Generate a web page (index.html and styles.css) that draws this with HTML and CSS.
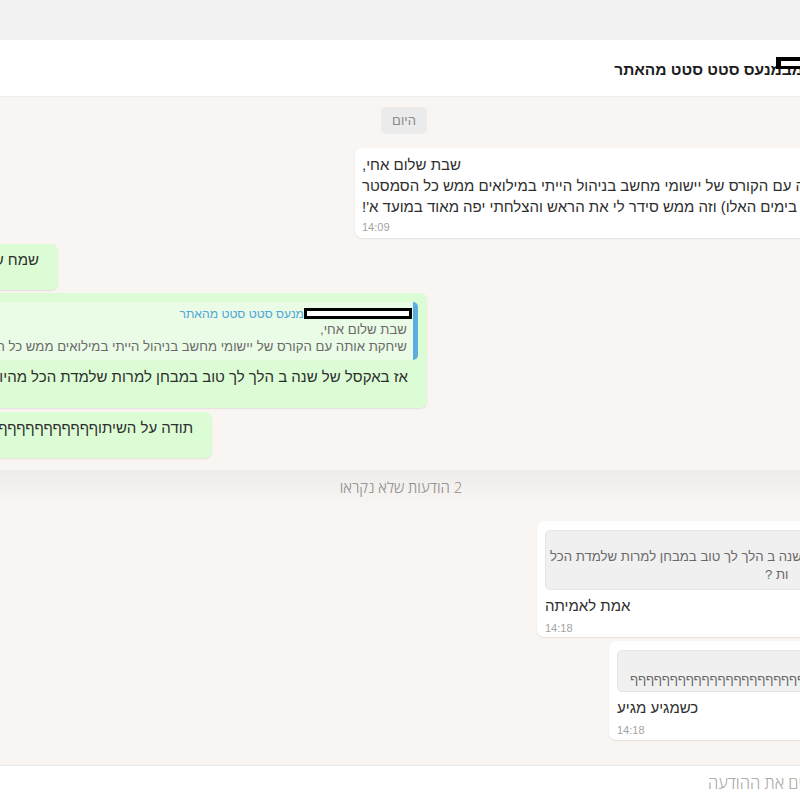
FILE: index.html
```html
<!DOCTYPE html>
<html lang="he">
<head>
<meta charset="utf-8">
<title>צ'אט</title>
<link rel="stylesheet" href="styles.css">
</head>
<body>
<div class="topbar"></div>
<div class="stage">
  <header class="chat-header">
    <div class="title">
      <span class="nm">מב<span class="redact redact-title"></span></span>
      <span class="title-text">מנעס סטט סטט מהאתר</span>
    </div>
  </header>

  <main class="chat">
    <section class="history history-read">
      <div class="date-chip">היום</div>

      <div class="msg in b1">
        <div class="body-ltr">
          <div class="ln">שבת שלום אחי,</div>
          <div class="ln">שיחקת אותה עם הקורס של יישומי מחשב בניהול הייתי במילואים ממש כל הסמסטר</div>
          <div class="ln">ובזכותך הבנתי הכל בימים האלו) וזה ממש סידר לי את הראש והצלחתי יפה מאוד במועד א'!</div>
          <div class="time">14:09</div>
        </div>
      </div>

      <div class="msg out g1">
        <div class="ln">שמח שהצלחת אחי!</div>
        <div class="time-space"></div>
      </div>

      <div class="msg out g2">
        <div class="quote quote-green">
          <div class="q-name"><span class="redact redact-name"></span><span>מנעס סטט סטט מהאתר</span></div>
          <div class="q-ln">שבת שלום אחי,</div>
          <div class="q-ln">שיחקת אותה עם הקורס של יישומי מחשב בניהול הייתי במילואים ממש כל הסמסטר</div>
        </div>
        <div class="ln g2-text">אז באקסל של שנה ב הלך לך טוב במבחן למרות שלמדת הכל מהיוטיוב בכמה שעות ?</div>
        <div class="time-space"></div>
      </div>

      <div class="msg out g3">
        <div class="ln">תודה על השיתוףףףףףףףףףףףףףףףףףףףףףףףףףףףףףףףף</div>
        <div class="time-space"></div>
      </div>
    </section>

    <div class="unread">2 הודעות שלא נקראו</div>

    <section class="history history-unread">
      <div class="msg in b2">
        <div class="body-ltr">
          <div class="quote quote-gray q2">
            <div class="q-ln">אז באקסל של שנה ב הלך לך טוב במבחן למרות שלמדת הכל</div>
            <div class="q-ln q2-tail">ות ?</div>
          </div>
          <div class="ln">אמת לאמיתה</div>
          <div class="time">14:18</div>
        </div>
      </div>

      <div class="msg in b3">
        <div class="body-ltr">
          <div class="quote quote-gray q3">
            <div class="q-ln">תודה על השיתוףףףףףףףףףףףףףףףףףףףףףףףףףףףףףףףףףף</div>
          </div>
          <div class="ln">כשמגיע מגיע</div>
          <div class="time">14:18</div>
        </div>
      </div>
    </section>
  </main>

  <footer class="composer">
    <div class="placeholder">כאן כותבים את ההודעה</div>
  </footer>
</div>
</body>
</html>
```

FILE: styles.css
```css
* { box-sizing: border-box; }

html, body {
  margin: 0;
  padding: 0;
}

body {
  width: 800px;
  height: 800px;
  overflow: hidden;
  background: #f2f2f2;
  font-family: "Liberation Sans", Arial, sans-serif;
  color: #2e2e2e;
}

.topbar {
  height: 40px;
  background: #f2f2f2;
}

.stage {
  width: 1000px;
  height: 760px;
  margin-left: -96px;
  direction: rtl;
  display: flex;
  flex-direction: column;
}

/* header */
.chat-header {
  height: 57px;
  flex: none;
  background: #ffffff;
  border-bottom: 1px solid #ededed;
  display: flex;
  align-items: center;
  padding-right: 101px;
  padding-top: 3px;
}

.title {
  display: flex;
  align-items: center;
  white-space: nowrap;
  font-size: 15.5px;
  font-weight: 700;
  color: #1c1c1c;
}

.nm {
  position: relative;
  display: inline-block;
}

.redact {
  display: inline-block;
  border: 3px solid #000;
  background: #fff;
}

.redact-title {
  position: absolute;
  left: -6px;
  top: -4px;
  width: 31px;
  height: 12px;
  border-width: 4px 3px 3px 5px;
}

/* chat area */
.chat {
  flex: 1;
  background: #f8f5f2;
  display: flex;
  flex-direction: column;
}

.history {
  display: flex;
  flex-direction: column;
  padding: 0 24px;
}

.history-read {
  padding-top: 10px;
  padding-bottom: 12px;
}

.history-unread {
  padding-top: 16px;
}

.date-chip {
  align-self: center;
  width: 46px;
  height: 27px;
  line-height: 27px;
  text-align: center;
  background: #ebebeb;
  color: #8a8a8a;
  font-size: 13px;
  border-radius: 5px;
  margin-bottom: 14px;
}

.msg {
  border-radius: 7px;
  box-shadow: 0 1px 1.5px rgba(0, 0, 0, 0.09);
  overflow: hidden;
}

.in {
  background: #ffffff;
  align-self: flex-start;
}

.out {
  background: #dcfcd5;
  align-self: flex-end;
}

.body-ltr {
  direction: ltr;
  display: flex;
  flex-direction: column;
  align-items: flex-start;
}

.ln {
  direction: rtl;
  white-space: nowrap;
  font-size: 15px;
  line-height: 21px;
  color: #2e2e2e;
}

.body-ltr .ln {
  width: max-content;
}

.time {
  direction: ltr;
  font-size: 11px;
  line-height: 14px;
  color: #a3a3a3;
}

.time-space {
  height: 14px;
}

/* individual bubbles */
.b1 {
  width: 525px;
  padding: 6px 7px 4px;
}

.b1 .time {
  margin-top: 3px;
}

.out .ln {
  padding-right: 10px;
}

.g1,
.g3 {
  padding: 5px 9px 6px;
}

.g1 {
  width: 130px;
  margin-top: 6px;
}

.g2 {
  width: 499px;
  margin-top: 3px;
  padding: 9px 9px 7px;
}

.g2-text {
  margin-top: 6px;
}

.g3 {
  width: 284px;
  margin-top: 4px;
}

/* quotes */
.quote {
  border-radius: 5px;
  overflow: hidden;
}

.quote-green {
  background: #eafbe6;
  border-right: 5px solid #5aaee0;
  padding: 4px 6px 5px 6px;
}

.q-name {
  display: flex;
  align-items: center;
  height: 15px;
  white-space: nowrap;
  font-size: 12.2px;
  color: #4fa7d9;
}

.redact-name {
  width: 108px;
  height: 11px;
  margin-right: -5px;
  flex: none;
}

.q-ln {
  direction: rtl;
  white-space: nowrap;
  font-size: 13.2px;
  line-height: 17px;
  color: #6a6a6a;
}

.quote-gray {
  align-self: stretch;
  background: #f0f0f0;
  border: 1px solid #e4e4e4;
  display: flex;
  flex-direction: column;
  align-items: flex-start;
}

.quote-gray .q-ln {
  line-height: 18px;
  width: max-content;
}

.b2 {
  width: 343px;
  padding: 9px 8px 2px;
}

.q2 {
  padding: 17px 0 5px 4px;
}

.q2-tail {
  margin-left: 215px;
}

.b2 .ln,
.b3 .ln {
  margin-top: 5px;
}

.b2 .time,
.b3 .time {
  margin-top: 5px;
}

.b3 {
  width: 271px;
  margin-top: 4px;
  padding: 9px 8px 3px;
}

.q3 {
  padding: 20px 0 2px 12px;
}

/* unread divider */
.unread {
  height: 35px;
  line-height: 35px;
  text-align: center;
  font-family: "Open Sans", "Liberation Sans", sans-serif;
  font-weight: 300;
  font-size: 15px;
  color: #8a8a8a;
  background: linear-gradient(#eeecea, #f8f5f2);
  padding-right: 6px;
}

/* composer */
.composer {
  height: 35px;
  flex: none;
  background: #ffffff;
  border-top: 1px solid #e9e9e9;
  padding-right: 46px;
}

.placeholder {
  line-height: 34px;
  white-space: nowrap;
  font-family: "Open Sans", "Liberation Sans", sans-serif;
  font-weight: 300;
  font-size: 16.5px;
  color: #a8a8a8;
}
```
